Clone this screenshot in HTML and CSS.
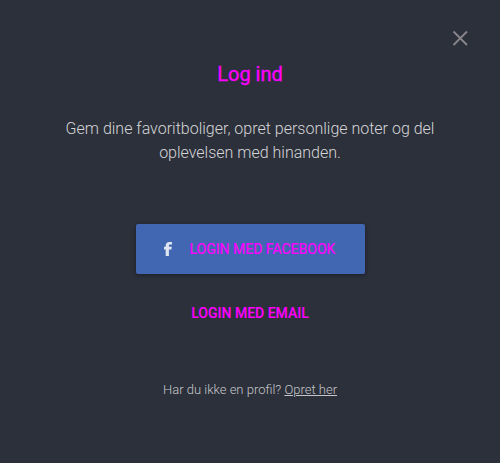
FILE: index.html
```html
<!DOCTYPE html>
<html lang="da">
<head>
<meta charset="utf-8">
<title>Log ind</title>
<link rel="stylesheet" href="styles.css">
</head>
<body>
<main class="dialog">
  <button class="close" aria-label="Luk"><svg width="16" height="16" viewBox="0 0 16 16"><path d="M1.5 1.5l13.5 13.5M15 1.5L1.5 15"/></svg></button>
  <h1 class="title">Log ind</h1>
  <p class="intro">Gem dine favoritboliger, opret personlige noter og del oplevelsen med hinanden.</p>
  <button class="facebook"><svg class="fb-icon" width="8" height="14" viewBox="0 0 8 14"><path d="M1.7 14V7.6H0V4.8h1.7V3.8C1.7 1.3 3 0 5.5 0H8v2.5H6.1c-.9 0-1.2.4-1.2 1.2v1.1h2.9l-.4 2.8H4.9V14z"/></svg><span>LOGIN MED FACEBOOK</span></button>
  <button class="email">LOGIN MED EMAIL</button>
  <p class="signup">Har du ikke en profil? <a href="#">Opret her</a></p>
</main>
</body>
</html>
```
FILE: styles.css
```css
* { box-sizing: border-box; }
body { margin: 0; background: #2c303a; font-family: Roboto, sans-serif; }
.dialog { position: relative; height: 463px; display: flex; flex-direction: column; align-items: center; color: #d5d5d8; }
button { border: 0; padding: 0; background: none; font-family: inherit; }
.close { position: absolute; top: 30px; right: 32px; width: 16px; height: 16px; }
.close svg { display: block; fill: none; stroke: #88868c; stroke-width: 1.8; }
.title { margin: 62px 0 0; font-size: 20px; line-height: 24px; font-weight: 400; color: #f0f; -webkit-text-stroke: .35px #f0f; }
.intro { width: 400px; margin: 31px 0 0; font-size: 16px; line-height: 24px; font-weight: 300; text-align: center; }
.facebook { display: flex; align-items: center; width: 229px; height: 50px; margin-top: 59px; padding-left: 28px; border-radius: 2px; background: #4267b2; box-shadow: 0 1px 4px rgba(0,0,0,.4); color: #f0f; font-size: 14px; -webkit-text-stroke: .2px #f0f; }
.fb-icon { margin: 0 18px 0 0; fill: #dfe6f2; }
.email { margin-top: 29px; height: 20px; line-height: 20px; color: #f0f; font-size: 14px; font-weight: 500; -webkit-text-stroke: .1px #f0f; }
.signup { margin: 57px 0 0; font-size: 13px; line-height: 20px; font-weight: 300; color: #c5c6ca; }
.signup a { color: inherit; }
```
